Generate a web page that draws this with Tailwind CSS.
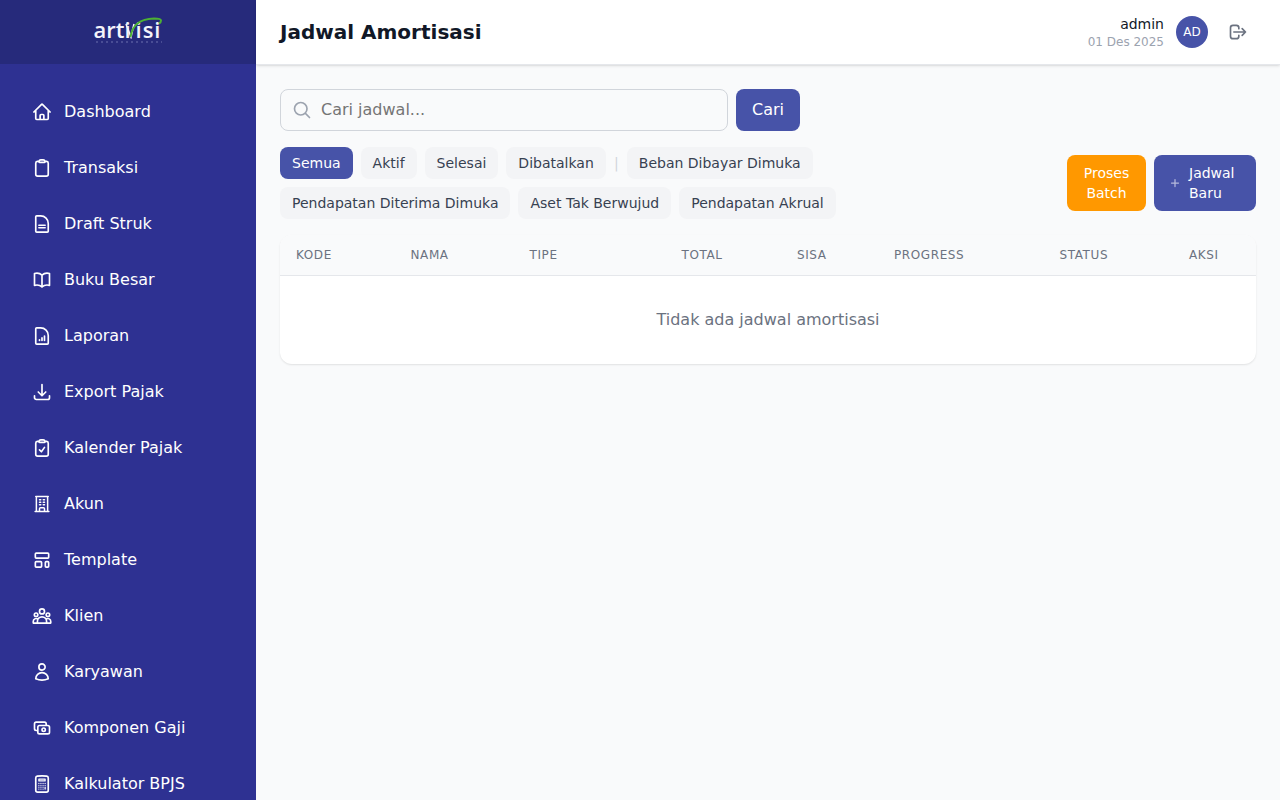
<!DOCTYPE html>
<html lang="en">
<head>
    <meta charset="UTF-8">
    <title>Jadwal Amortisasi</title>
    <script src="https://cdn.jsdelivr.net/npm/@tailwindcss/browser@4"></script>
</head>
<body class="h-[800px] overflow-hidden bg-[#f9fafb] font-['DejaVu_Sans',sans-serif]">
<div class="flex h-[800px]">
    <!-- Sidebar -->
    <aside class="w-64 shrink-0 h-full overflow-hidden bg-[#2e3192] text-white">
        <div class="h-16 bg-[#262a7b] flex justify-center pt-[18px]">
            <div class="relative w-[67px] h-[22px] flex items-end justify-between text-[22px] leading-[22px] font-semibold font-['Open_Sans',sans-serif] text-[#f4f4fa]">
                <span class="-ml-[1px]">arti</span>
                <span class="w-[8px]"></span>
                <span class="tracking-[1px]">isi</span>
                <!-- swoosh + V of the logo -->
                <svg class="absolute left-[30px] -top-[1px] w-[38px] h-[22px]" viewBox="0 0 38 22" fill="none">
                    <path d="M1 7 L6 20 L9 7" stroke="#f4f4fa" stroke-width="1.6"/>
                    <path d="M5.5 20 C7 10 12 2 29 1.5 C33 1.5 36 2 36 3.5 C36 5 35 6 34 6.5" stroke="#4cb034" stroke-width="2"/>
                </svg>
                <svg class="absolute left-[1px] -bottom-[3px] w-[66px] h-[2px]" viewBox="0 0 66 2" fill="none">
                    <path d="M0 1H66" stroke="#6d70b0" stroke-width="1" stroke-dasharray="2 3"/>
                </svg>
            </div>
        </div>
        <nav class="px-4 pt-6">
            <a class="flex items-center gap-3 h-12 px-4 mb-2 text-base">
                <svg class="w-5 h-5 shrink-0" fill="none" viewBox="0 0 24 24" stroke="currentColor" stroke-width="2" stroke-linecap="round" stroke-linejoin="round"><path d="M2.25 12l8.954-8.955c.44-.439 1.152-.439 1.591 0L21.75 12M4.5 9.75v10.125c0 .621.504 1.125 1.125 1.125H9.75v-4.875c0-.621.504-1.125 1.125-1.125h2.25c.621 0 1.125.504 1.125 1.125V21h4.125c.621 0 1.125-.504 1.125-1.125V9.75M8.25 21h8.25"/></svg>
                Dashboard
            </a>
            <a class="flex items-center gap-3 h-12 px-4 mb-2 text-base">
                <svg class="w-5 h-5 shrink-0" fill="none" viewBox="0 0 24 24" stroke="currentColor" stroke-width="2" stroke-linecap="round" stroke-linejoin="round"><path d="M15.666 3.888A2.25 2.25 0 0013.5 2.25h-3c-1.03 0-1.9.693-2.166 1.638m7.332 0c.055.194.084.4.084.612v0a.75.75 0 01-.75.75H9a.75.75 0 01-.75-.75v0c0-.212.03-.418.084-.612m7.332 0c.646.049 1.288.11 1.927.184 1.1.128 1.907 1.077 1.907 2.185V19.5a2.25 2.25 0 01-2.25 2.25H6.75A2.25 2.25 0 014.5 19.5V6.257c0-1.108.806-2.057 1.907-2.185a48.208 48.208 0 011.927-.184"/></svg>
                Transaksi
            </a>
            <a class="flex items-center gap-3 h-12 px-4 mb-2 text-base">
                <svg class="w-5 h-5 shrink-0" fill="none" viewBox="0 0 24 24" stroke="currentColor" stroke-width="2" stroke-linecap="round" stroke-linejoin="round"><path d="M8.25 13.5h7.5M8.25 16.5h7.5M10.5 2.25H5.625c-.621 0-1.125.504-1.125 1.125v17.25c0 .621.504 1.125 1.125 1.125h12.75c.621 0 1.125-.504 1.125-1.125V11.25a9 9 0 00-9-9z"/></svg>
                Draft Struk
            </a>
            <a class="flex items-center gap-3 h-12 px-4 mb-2 text-base">
                <svg class="w-5 h-5 shrink-0" fill="none" viewBox="0 0 24 24" stroke="currentColor" stroke-width="2" stroke-linecap="round" stroke-linejoin="round"><path d="M12 6.042A8.967 8.967 0 006 3.75c-1.052 0-2.062.18-3 .512v14.25A8.987 8.987 0 016 18c2.305 0 4.408.867 6 2.292m0-14.25a8.966 8.966 0 016-2.292c1.052 0 2.062.18 3 .512v14.25A8.987 8.987 0 0018 18a8.967 8.967 0 00-6 2.292m0-14.25v14.25"/></svg>
                Buku Besar
            </a>
            <a class="flex items-center gap-3 h-12 px-4 mb-2 text-base">
                <svg class="w-5 h-5 shrink-0" fill="none" viewBox="0 0 24 24" stroke="currentColor" stroke-width="2" stroke-linecap="round" stroke-linejoin="round"><path d="M9 16.5v.75m3-3v3M15 12v5.25m-4.5-15H5.625c-.621 0-1.125.504-1.125 1.125v17.25c0 .621.504 1.125 1.125 1.125h12.75c.621 0 1.125-.504 1.125-1.125V11.25a9 9 0 00-9-9z"/></svg>
                Laporan
            </a>
            <a class="flex items-center gap-3 h-12 px-4 mb-2 text-base">
                <svg class="w-5 h-5 shrink-0" fill="none" viewBox="0 0 24 24" stroke="currentColor" stroke-width="2" stroke-linecap="round" stroke-linejoin="round"><path d="M3 16.5v2.25A2.25 2.25 0 005.25 21h13.5A2.25 2.25 0 0021 18.75V16.5M16.5 12L12 16.5m0 0L7.5 12m4.5 4.5V3"/></svg>
                Export Pajak
            </a>
            <a class="flex items-center gap-3 h-12 px-4 mb-2 text-base">
                <svg class="w-5 h-5 shrink-0" fill="none" viewBox="0 0 24 24" stroke="currentColor" stroke-width="2" stroke-linecap="round" stroke-linejoin="round"><path d="M9 14.25l2.25 2.25L15 11.25M15.666 3.888A2.25 2.25 0 0013.5 2.25h-3c-1.03 0-1.9.693-2.166 1.638m7.332 0c.055.194.084.4.084.612v0a.75.75 0 01-.75.75H9a.75.75 0 01-.75-.75v0c0-.212.03-.418.084-.612m7.332 0c.646.049 1.288.11 1.927.184 1.1.128 1.907 1.077 1.907 2.185V19.5a2.25 2.25 0 01-2.25 2.25H6.75A2.25 2.25 0 014.5 19.5V6.257c0-1.108.806-2.057 1.907-2.185a48.208 48.208 0 011.927-.184"/></svg>
                Kalender Pajak
            </a>
            <a class="flex items-center gap-3 h-12 px-4 mb-2 text-base">
                <svg class="w-5 h-5 shrink-0" fill="none" viewBox="0 0 24 24" stroke="currentColor" stroke-width="1.8" stroke-linecap="round" stroke-linejoin="round"><path d="M3.75 21h16.5M4.5 3h15M5.25 3v18m13.5-18v18M9 6.75h1.5m-1.5 3h1.5m-1.5 3h1.5m3-6H15m-1.5 3H15m-1.5 3H15M9 21v-3.375c0-.621.504-1.125 1.125-1.125h3.75c.621 0 1.125.504 1.125 1.125V21"/></svg>
                Akun
            </a>
            <a class="flex items-center gap-3 h-12 px-4 mb-2 text-base">
                <svg class="w-5 h-5 shrink-0" fill="none" viewBox="0 0 24 24" stroke="currentColor" stroke-width="2" stroke-linecap="round" stroke-linejoin="round"><rect x="4" y="3.75" width="16" height="6" rx="1.1"/><rect x="4" y="14" width="7.5" height="6.5" rx="1.1"/><rect x="16" y="14" width="4" height="6.5" rx="1.1"/></svg>
                Template
            </a>
            <a class="flex items-center gap-3 h-12 px-4 mb-2 text-base">
                <svg class="w-5 h-5 shrink-0" fill="none" viewBox="0 0 24 24" stroke="currentColor" stroke-width="2" stroke-linecap="round" stroke-linejoin="round"><circle cx="12" cy="6.5" r="3"/><circle cx="4.9" cy="10.5" r="2.1"/><circle cx="19.1" cy="10.5" r="2.1"/><path d="M6.5 20.5v-2a5.5 5.5 0 0111 0v2zM6.5 20.5H1.5v-2a3.5 3.5 0 015.4-2.9M17.5 20.5h5v-2a3.5 3.5 0 00-5.4-2.9"/></svg>
                Klien
            </a>
            <a class="flex items-center gap-3 h-12 px-4 mb-2 text-base">
                <svg class="w-5 h-5 shrink-0" fill="none" viewBox="0 0 24 24" stroke="currentColor" stroke-width="2" stroke-linecap="round" stroke-linejoin="round"><path d="M15.75 6a3.75 3.75 0 11-7.5 0 3.75 3.75 0 017.5 0zM4.501 20.118a7.5 7.5 0 0114.998 0A17.933 17.933 0 0112 21.75c-2.676 0-5.216-.584-7.499-1.632z"/></svg>
                Karyawan
            </a>
            <a class="flex items-center gap-3 h-12 px-4 mb-2 text-base">
                <svg class="w-5 h-5 shrink-0" fill="none" viewBox="0 0 24 24" stroke="currentColor" stroke-width="2" stroke-linecap="round" stroke-linejoin="round"><path d="M17 9V7a2 2 0 00-2-2H5a2 2 0 00-2 2v6a2 2 0 002 2h2m2 4h10a2 2 0 002-2v-6a2 2 0 00-2-2H9a2 2 0 00-2 2v6a2 2 0 002 2zm7-5a2 2 0 11-4 0 2 2 0 014 0z"/></svg>
                Komponen Gaji
            </a>
            <a class="flex items-center gap-3 h-12 px-4 mb-2 text-base">
                <svg class="w-5 h-5 shrink-0" fill="none" viewBox="0 0 24 24" stroke="currentColor" stroke-width="1.5" stroke-linecap="round" stroke-linejoin="round"><path d="M15.75 15.75V18m-7.5-6.75h.008v.008H8.25v-.008zm0 2.25h.008v.008H8.25V13.5zm0 2.25h.008v.008H8.25v-.008zm0 2.25h.008v.008H8.25V18zm2.498-6.75h.007v.008h-.007v-.008zm0 2.25h.007v.008h-.007V13.5zm0 2.25h.007v.008h-.007v-.008zm0 2.25h.007v.008h-.007V18zm2.504-6.75h.008v.008h-.008v-.008zm0 2.25h.008v.008h-.008V13.5zm0 2.25h.008v.008h-.008v-.008zm0 2.25h.008v.008h-.008V18zm2.498-6.75h.008v.008h-.008v-.008zm0 2.25h.008v.008h-.008V13.5zM8.25 6h7.5v2.25h-7.5V6z"/><path stroke-width="2" d="M12 2.25c-1.892 0-3.758.11-5.593.322C5.307 2.7 4.5 3.65 4.5 4.757V19.5a2.25 2.25 0 002.25 2.25h10.5a2.25 2.25 0 002.25-2.25V4.757c0-1.108-.806-2.057-1.907-2.185A48.507 48.507 0 0012 2.25z"/></svg>
                Kalkulator BPJS
            </a>
        </nav>
    </aside>

    <div class="flex-1 min-w-0 flex flex-col">
        <!-- Top bar -->
        <header class="h-[65px] shrink-0 bg-white border-b border-[#e5e7eb] shadow-sm flex items-center justify-between pl-6 pr-8">
            <h1 class="text-xl font-bold text-[#111827]">Jadwal Amortisasi</h1>
            <div class="flex items-center">
                <div class="text-right mr-3">
                    <div class="text-sm leading-5 text-[#111827]">admin</div>
                    <div class="text-xs leading-4 text-[#9ca3af]">01 Des 2025</div>
                </div>
                <div class="w-8 h-8 rounded-full bg-[#4753a8] text-white text-xs flex items-center justify-center">AD</div>
                <button class="ml-5 text-[#6b7280]">
                    <svg class="w-5 h-5 block" fill="none" viewBox="0 0 24 24" stroke="currentColor" stroke-width="2" stroke-linecap="round" stroke-linejoin="round"><path d="M17 16l4-4m0 0l-4-4m4 4H7m6 4v1a3 3 0 01-3 3H6a3 3 0 01-3-3V7a3 3 0 013-3h4a3 3 0 013 3v1"/></svg>
                </button>
            </div>
        </header>

        <main class="flex-1 px-6 pt-6">
            <!-- Search -->
            <form class="flex gap-2 mb-4">
                <div class="relative w-[448px]">
                    <svg class="absolute left-3 top-[11px] w-5 h-5 text-[#9ca3af]" fill="none" viewBox="0 0 24 24" stroke="currentColor" stroke-width="2" stroke-linecap="round" stroke-linejoin="round"><path d="M21 21l-5.197-5.197m0 0A7.5 7.5 0 105.196 5.196a7.5 7.5 0 0010.607 10.607z"/></svg>
                    <input type="text" placeholder="Cari jadwal..." class="w-full h-[42px] pl-10 pr-4 pb-[2px] text-base bg-[#f9fafb] border border-[#d1d5db] rounded-lg placeholder:text-[#757575]">
                </div>
                <button type="button" class="h-[42px] px-4 rounded-lg bg-[#4753a8] text-white text-base">Cari</button>
            </form>

            <!-- Filters -->
            <div class="flex items-center justify-between mb-4">
                <div class="w-[600px] flex flex-wrap items-center gap-2">
                    <button class="h-8 px-3 rounded-lg text-sm bg-[#4753a8] text-white">Semua</button>
                    <button class="h-8 px-3 rounded-lg text-sm bg-[#f3f4f6] text-[#374151]">Aktif</button>
                    <button class="h-8 px-3 rounded-lg text-sm bg-[#f3f4f6] text-[#374151]">Selesai</button>
                    <button class="h-8 px-3 rounded-lg text-sm bg-[#f3f4f6] text-[#374151]">Dibatalkan</button>
                    <span class="w-[5px] text-center text-sm text-[#d1d5db]">|</span>
                    <button class="h-8 px-3 rounded-lg text-sm bg-[#f3f4f6] text-[#374151]">Beban Dibayar Dimuka</button>
                    <button class="h-8 px-3 rounded-lg text-sm bg-[#f3f4f6] text-[#374151]">Pendapatan Diterima Dimuka</button>
                    <button class="h-8 px-3 rounded-lg text-sm bg-[#f3f4f6] text-[#374151]">Aset Tak Berwujud</button>
                    <button class="h-8 px-3 rounded-lg text-sm bg-[#f3f4f6] text-[#374151]">Pendapatan Akrual</button>
                </div>
                <div class="flex gap-2">
                    <button class="w-[79px] h-14 rounded-lg bg-[#ff9800] text-white text-sm leading-5">Proses Batch</button>
                    <button class="w-[102px] h-14 rounded-lg bg-[#4753a8] text-white text-sm leading-5 flex items-center justify-center gap-2">
                        <svg class="w-3 h-3 shrink-0 opacity-60" fill="none" viewBox="0 0 24 24" stroke="currentColor" stroke-width="2.5" stroke-linecap="round"><path d="M12 5v14M5 12h14"/></svg>
                        <span class="text-left w-[52px]">Jadwal Baru</span>
                    </button>
                </div>
            </div>

            <!-- Table -->
            <div class="bg-white rounded-xl shadow-[0_1px_2px_rgba(0,0,0,0.1)] overflow-hidden">
                <table class="w-[976px] table-fixed">
                    <thead class="bg-[#f9fafb] border-b border-[#e5e7eb]">
                        <tr class="h-10 text-left text-xs font-medium uppercase tracking-wider text-[#6b7280]">
                            <th class="w-[114.5px] px-4 font-medium">Kode</th>
                            <th class="w-[119px] px-4 font-medium">Nama</th>
                            <th class="w-[152px] px-4 font-medium">Tipe</th>
                            <th class="w-[115.5px] px-4 font-medium">Total</th>
                            <th class="w-[97px] px-4 font-medium">Sisa</th>
                            <th class="w-[165.5px] px-4 font-medium">Progress</th>
                            <th class="w-[129.5px] px-4 font-medium">Status</th>
                            <th class="w-[83px] px-4 font-medium">Aksi</th>
                        </tr>
                    </thead>
                    <tbody>
                        <tr>
                            <td colspan="8" class="h-[89px] text-center text-base text-[#6b7280]">Tidak ada jadwal amortisasi</td>
                        </tr>
                    </tbody>
                </table>
            </div>
        </main>
    </div>
</div>
</body>
</html>
